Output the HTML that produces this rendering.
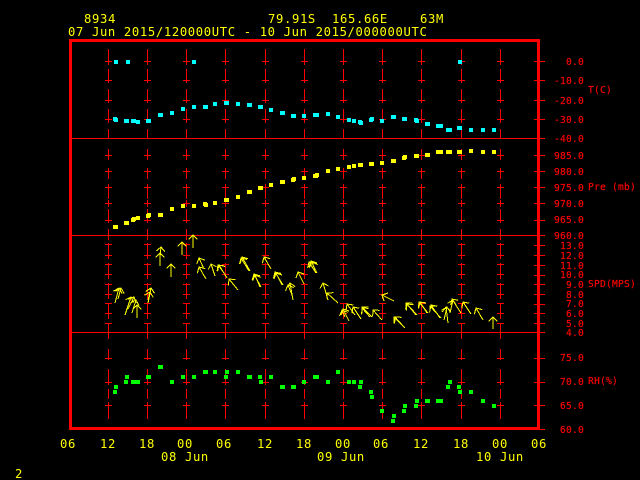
<!DOCTYPE html>
<html>
<head>
<meta charset="utf-8">
<title>8934 Station Time Series</title>
<style>
html,body{margin:0;padding:0;background:#000;width:640px;height:480px;overflow:hidden}
svg{display:block}
.t{font-family:"DejaVu Sans Mono","Liberation Mono",monospace;font-size:12.2px;letter-spacing:.65px;fill:#ff0}
.r{font-family:"DejaVu Sans Mono","Liberation Mono",monospace;font-size:9.6px;letter-spacing:.22px;fill:#f00;stroke:#f00;stroke-width:.15px}
.e{text-anchor:end}
</style>
</head>
<body>
<svg width="640" height="480" viewBox="0 0 640 480" xmlns="http://www.w3.org/2000/svg">
<defs>
<g id="col">
<path fill="none" stroke="#f00" stroke-width="1" shape-rendering="crispEdges" d="M.5 49V65M.5 69V83M.5 89V103M.5 109V123M.5 129V138
M.5 149V160M.5 168V179M.5 184V199M.5 200V207M.5 209V223M.5 229V240
M.5 243V259M.5 263V279M.5 283V299M.5 303V319M.5 323V339
M.5 349V360M.5 369V385M.5 389V399M.5 402V419
M-3 61.5H4M-3 80.5H4M-3 100.5H4M-3 119.5H4
M-3 155.5H4M-3 171.5H4M-3 187.5H4M-3 203.5H4M-3 220.5H4
M-3 244.5H4M-3 255.5H4M-3 264.5H4M-3 274.5H4M-3 284.5H4M-3 294.5H4M-3 303.5H4M-3 313.5H4M-3 323.5H4
M-3 358.5H4M-3 382.5H4M-3 405.5H4"/>
</g>
<marker id="h" markerUnits="userSpaceOnUse" markerWidth="12" markerHeight="12" refX="6" refY="6" orient="auto">
<path d="M1.5 1.5L6 6L1.5 10.5" fill="none" stroke="#ff0" stroke-width="1" shape-rendering="crispEdges"/>
</marker>
</defs>

<rect width="640" height="480" fill="#000"/>

<use href="#col" x="108"/><use href="#col" x="147"/><use href="#col" x="186"/><use href="#col" x="225"/>
<use href="#col" x="265"/><use href="#col" x="304"/><use href="#col" x="343"/><use href="#col" x="382"/>
<use href="#col" x="421"/><use href="#col" x="461"/><use href="#col" x="500"/>

<!-- panel dividers and right axis ticks -->
<path fill="none" stroke="#f00" stroke-width="1" shape-rendering="crispEdges" d="M72 138.5H545M72 235.5H545M72 332.5H545
M534 61.5H545M534 80.5H545M534 100.5H545M534 119.5H545
M534 155.5H545M534 171.5H545M534 187.5H545M534 203.5H545M534 220.5H545
M534 245.5H545M534 255.5H545M534 265.5H545M534 275.5H545M534 284.5H545M534 294.5H545M534 304.5H545M534 313.5H545M534 323.5H545
M534 358.5H545M534 382.5H545M534 405.5H545M537 429.5H545"/>
<rect x="70.5" y="40.5" width="468" height="388" fill="none" stroke="#f00" stroke-width="3" shape-rendering="crispEdges"/>

<!-- temperature -->
<g fill="#0ff" shape-rendering="crispEdges">
<rect x="114" y="60" width="4" height="4"/><rect x="126" y="60" width="4" height="4"/><rect x="192" y="60" width="4" height="4"/><rect x="458" y="60" width="4" height="4"/>
<rect x="113" y="117" width="4" height="4"/><rect x="114" y="118" width="4" height="4"/><rect x="124" y="119" width="5" height="4"/><rect x="131" y="119" width="5" height="4"/><rect x="136" y="120" width="4" height="4"/><rect x="146" y="119" width="5" height="4"/><rect x="158" y="113" width="5" height="4"/><rect x="170" y="111" width="4" height="4"/><rect x="181" y="107" width="4" height="4"/><rect x="192" y="105" width="4" height="4"/><rect x="203" y="105" width="5" height="4"/><rect x="213" y="102" width="4" height="4"/><rect x="224" y="101" width="5" height="4"/><rect x="236" y="102" width="4" height="4"/><rect x="247" y="103" width="5" height="4"/><rect x="258" y="105" width="5" height="4"/><rect x="269" y="108" width="4" height="4"/><rect x="280" y="111" width="5" height="4"/><rect x="291" y="114" width="5" height="4"/><rect x="302" y="114" width="4" height="4"/><rect x="313" y="113" width="6" height="4"/>
<rect x="326" y="112" width="4" height="4"/><rect x="336" y="115" width="4" height="4"/><rect x="347" y="118" width="4" height="4"/><rect x="352" y="119" width="4" height="4"/><rect x="358" y="120" width="4" height="4"/><rect x="359" y="121" width="4" height="4"/><rect x="369" y="118" width="4" height="4"/><rect x="370" y="117" width="4" height="4"/><rect x="380" y="119" width="4" height="4"/><rect x="391" y="115" width="5" height="4"/><rect x="402" y="117" width="5" height="4"/><rect x="414" y="118" width="4" height="4"/><rect x="415" y="119" width="4" height="4"/><rect x="425" y="122" width="5" height="4"/><rect x="436" y="124" width="7" height="4"/><rect x="446" y="128" width="6" height="4"/><rect x="457" y="126" width="5" height="4"/><rect x="469" y="128" width="4" height="4"/><rect x="481" y="128" width="4" height="4"/><rect x="492" y="128" width="4" height="4"/>
</g>

<!-- pressure -->
<g fill="#ff0" shape-rendering="crispEdges">
<rect x="113" y="225" width="5" height="4"/><rect x="124" y="221" width="5" height="4"/><rect x="131" y="218" width="4" height="4"/><rect x="132" y="217" width="4" height="4"/><rect x="136" y="216" width="4" height="4"/><rect x="146" y="214" width="4" height="4"/><rect x="147" y="213" width="4" height="4"/><rect x="158" y="213" width="5" height="4"/><rect x="170" y="207" width="4" height="4"/><rect x="181" y="204" width="4" height="4"/><rect x="192" y="204" width="4" height="4"/><rect x="203" y="202" width="4" height="4"/><rect x="204" y="203" width="4" height="4"/><rect x="213" y="201" width="4" height="4"/><rect x="224" y="198" width="5" height="4"/><rect x="236" y="195" width="4" height="4"/><rect x="247" y="190" width="5" height="4"/><rect x="258" y="186" width="5" height="4"/><rect x="269" y="183" width="4" height="4"/><rect x="280" y="180" width="5" height="4"/><rect x="291" y="178" width="4" height="4"/><rect x="292" y="177" width="4" height="4"/><rect x="302" y="176" width="4" height="4"/><rect x="313" y="174" width="5" height="4"/><rect x="315" y="173" width="4" height="4"/>
<rect x="326" y="169" width="4" height="4"/><rect x="336" y="167" width="4" height="4"/><rect x="347" y="165" width="4" height="4"/><rect x="352" y="164" width="4" height="4"/><rect x="358" y="163" width="5" height="4"/><rect x="369" y="162" width="5" height="4"/><rect x="380" y="161" width="4" height="4"/><rect x="391" y="159" width="5" height="4"/><rect x="402" y="156" width="4" height="4"/><rect x="403" y="155" width="4" height="4"/><rect x="414" y="154" width="5" height="4"/><rect x="425" y="153" width="5" height="4"/><rect x="436" y="150" width="7" height="4"/><rect x="446" y="150" width="6" height="4"/><rect x="457" y="150" width="5" height="4"/><rect x="469" y="149" width="4" height="4"/><rect x="481" y="150" width="4" height="4"/><rect x="492" y="150" width="4" height="4"/>
</g>

<!-- humidity -->
<g fill="#0f0" shape-rendering="crispEdges">
<rect x="113" y="390" width="4" height="4"/><rect x="114" y="385" width="4" height="4"/><rect x="125" y="375" width="4" height="4"/><rect x="124" y="380" width="4" height="4"/><rect x="131" y="380" width="9" height="4"/><rect x="146" y="375" width="5" height="4"/><rect x="158" y="365" width="5" height="4"/><rect x="170" y="380" width="4" height="4"/><rect x="181" y="375" width="4" height="4"/><rect x="192" y="375" width="4" height="4"/><rect x="203" y="370" width="5" height="4"/><rect x="213" y="370" width="4" height="4"/><rect x="225" y="370" width="4" height="4"/><rect x="224" y="375" width="4" height="4"/><rect x="236" y="370" width="4" height="4"/><rect x="247" y="375" width="5" height="4"/><rect x="258" y="375" width="4" height="4"/><rect x="259" y="380" width="4" height="4"/><rect x="269" y="375" width="4" height="4"/><rect x="280" y="385" width="5" height="4"/><rect x="291" y="385" width="5" height="4"/><rect x="302" y="380" width="4" height="4"/><rect x="313" y="375" width="6" height="4"/>
<rect x="326" y="380" width="4" height="4"/><rect x="336" y="370" width="4" height="4"/><rect x="347" y="380" width="4" height="4"/><rect x="352" y="380" width="4" height="4"/><rect x="358" y="385" width="4" height="4"/><rect x="359" y="380" width="4" height="4"/><rect x="369" y="390" width="4" height="4"/><rect x="370" y="395" width="4" height="4"/><rect x="380" y="409" width="4" height="4"/><rect x="391" y="419" width="4" height="4"/><rect x="392" y="414" width="4" height="4"/><rect x="402" y="409" width="4" height="4"/><rect x="403" y="404" width="4" height="4"/><rect x="414" y="404" width="4" height="4"/><rect x="415" y="399" width="4" height="4"/><rect x="425" y="399" width="5" height="4"/><rect x="436" y="399" width="7" height="4"/><rect x="446" y="385" width="4" height="4"/><rect x="448" y="380" width="4" height="4"/><rect x="457" y="385" width="4" height="4"/><rect x="458" y="390" width="4" height="4"/><rect x="469" y="390" width="4" height="4"/><rect x="481" y="399" width="4" height="4"/><rect x="492" y="404" width="4" height="4"/>
</g>

<!-- wind arrows -->
<g fill="none" stroke="#ff0" stroke-width="1" shape-rendering="crispEdges">
<path d="M115 303L119 288" marker-end="url(#h)"/><path d="M118 299L121 288" marker-end="url(#h)"/>
<path d="M125 315L131 297" marker-end="url(#h)"/><path d="M128 309L134 297" marker-end="url(#h)"/><path d="M132 313L136 300" marker-end="url(#h)"/><path d="M137 318L137 305" marker-end="url(#h)"/>
<path d="M148 303L151 288" marker-end="url(#h)"/><path d="M148 300L150 292" marker-end="url(#h)"/>
<path d="M160 266L160 253" marker-end="url(#h)"/><path d="M160 258L161 247" marker-end="url(#h)"/>
<path d="M171 277L171 264" marker-end="url(#h)"/>
<path d="M182 255L182 242" marker-end="url(#h)"/>
<path d="M193 248L193 235" marker-end="url(#h)"/>
<path d="M204 269L199 258" marker-end="url(#h)"/><path d="M206 279L199 267" marker-end="url(#h)"/>
<path d="M215 276L211 264" marker-end="url(#h)"/>
<path d="M227 278L219 265" marker-end="url(#h)"/><path d="M224 273L218 265" marker-end="url(#h)"/>
<path d="M238 290L229 279" marker-end="url(#h)"/>
<path d="M250 271L242 257" marker-end="url(#h)"/><path d="M249 271L241 258" marker-end="url(#h)"/>
<path d="M261 287L254 274" marker-end="url(#h)"/><path d="M260 287L255 275" marker-end="url(#h)"/>
<path d="M271 269L264 257" marker-end="url(#h)"/>
<path d="M283 285L275 272" marker-end="url(#h)"/><path d="M282 285L276 273" marker-end="url(#h)"/>
<path d="M293 300L290 283" marker-end="url(#h)"/><path d="M292 295L288 285" marker-end="url(#h)"/>
<path d="M304 284L298 272" marker-end="url(#h)"/>
<path d="M317 273L311 261" marker-end="url(#h)"/><path d="M316 273L309 262" marker-end="url(#h)"/><path d="M315 270L312 262" marker-end="url(#h)"/>
<path d="M328 300L323 283" marker-end="url(#h)"/>
<path d="M338 303L327 293" marker-end="url(#h)"/>
<path d="M349 321L343 309" marker-end="url(#h)"/><path d="M345 317L342 310" marker-end="url(#h)"/>
<path d="M355 315L347 304" marker-end="url(#h)"/><path d="M361 319L353 307" marker-end="url(#h)"/>
<path d="M372 317L362 307" marker-end="url(#h)"/><path d="M370 317L362 308" marker-end="url(#h)"/>
<path d="M382 320L373 310" marker-end="url(#h)"/>
<path d="M394 301L382 295" marker-end="url(#h)"/>
<path d="M405 328L394 317" marker-end="url(#h)"/><path d="M404 327L395 317" marker-end="url(#h)"/>
<path d="M417 315L406 303" marker-end="url(#h)"/><path d="M416 315L407 304" marker-end="url(#h)"/>
<path d="M428 313L419 302" marker-end="url(#h)"/><path d="M427 313L420 302" marker-end="url(#h)"/>
<path d="M441 318L430 306" marker-end="url(#h)"/><path d="M440 318L431 305" marker-end="url(#h)"/>
<path d="M448 323L446 307" marker-end="url(#h)"/><path d="M444 320L447 307" marker-end="url(#h)"/>
<path d="M461 313L452 299" marker-end="url(#h)"/><path d="M450 313L453 300" marker-end="url(#h)"/>
<path d="M471 314L463 302" marker-end="url(#h)"/>
<path d="M483 320L476 308" marker-end="url(#h)"/>
<path d="M493 329L493 317" marker-end="url(#h)"/>
</g>

<!-- titles -->
<text class="t" x="84" y="23">8934</text>
<text class="t" x="268" y="23">79.91S</text>
<text class="t" x="332" y="23">165.66E</text>
<text class="t" x="420" y="23">63M</text>
<text class="t" x="68" y="36">07 Jun 2015/120000UTC - 10 Jun 2015/000000UTC</text>

<!-- right labels -->
<text class="r e" x="584" y="65">0.0</text>
<text class="r e" x="584" y="84">-10.0</text>
<text class="r e" x="584" y="104">-20.0</text>
<text class="r e" x="584" y="123">-30.0</text>
<text class="r e" x="584" y="142">-40.0</text>
<text class="r e" x="584" y="159">985.0</text>
<text class="r e" x="584" y="175">980.0</text>
<text class="r e" x="584" y="191">975.0</text>
<text class="r e" x="584" y="207">970.0</text>
<text class="r e" x="584" y="223">965.0</text>
<text class="r e" x="584" y="239">960.0</text>
<text class="r e" x="584" y="249">13.0</text>
<text class="r e" x="584" y="259">12.0</text>
<text class="r e" x="584" y="269">11.0</text>
<text class="r e" x="584" y="278">10.0</text>
<text class="r e" x="584" y="288">9.0</text>
<text class="r e" x="584" y="298">8.0</text>
<text class="r e" x="584" y="307">7.0</text>
<text class="r e" x="584" y="317">6.0</text>
<text class="r e" x="584" y="327">5.0</text>
<text class="r e" x="584" y="336">4.0</text>
<text class="r e" x="584" y="361">75.0</text>
<text class="r e" x="584" y="385">70.0</text>
<text class="r e" x="584" y="409">65.0</text>
<text class="r e" x="584" y="433">60.0</text>
<text class="r" x="588" y="93">T(C)</text>
<text class="r" x="588" y="190">Pre (mb)</text>
<text class="r" x="588" y="287">SPD(MPS)</text>
<text class="r" x="588" y="384">RH(%)</text>

<!-- time axis -->
<text class="t" x="60" y="448">06</text>
<text class="t" x="100" y="448">12</text>
<text class="t" x="139" y="448">18</text>
<text class="t" x="177" y="448">00</text>
<text class="t" x="216" y="448">06</text>
<text class="t" x="257" y="448">12</text>
<text class="t" x="296" y="448">18</text>
<text class="t" x="335" y="448">00</text>
<text class="t" x="373" y="448">06</text>
<text class="t" x="413" y="448">12</text>
<text class="t" x="453" y="448">18</text>
<text class="t" x="492" y="448">00</text>
<text class="t" x="531" y="448">06</text>
<text class="t" x="161" y="461">08 Jun</text>
<text class="t" x="317" y="461">09 Jun</text>
<text class="t" x="476" y="461">10 Jun</text>
<text class="t" x="15" y="478">2</text>
</svg>
</body>
</html>
